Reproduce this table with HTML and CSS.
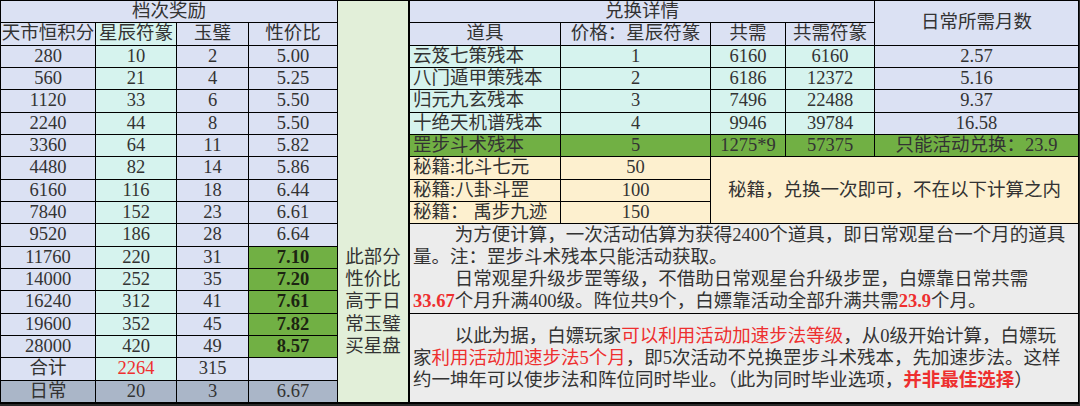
FILE: index.html
```html
<!DOCTYPE html>
<html lang="zh-CN">
<head>
<meta charset="utf-8">
<title>档次奖励 / 兑换详情</title>
<link rel="stylesheet" href="styles.css">
</head>
<body>
<div class="sheet">
  <div class="c lv span4">档次奖励</div>
  <div class="mid">
    <span>此部分</span>
    <span>性价比</span>
    <span>高于日</span>
    <span>常玉璧</span>
    <span>买星盘</span>
  </div>
  <div class="c lv span4">兑换详情</div>
  <div class="c lv months">日常所需月数</div>

  <div class="c lv">天市恒积分</div><div class="c cy">星辰符篆</div><div class="c lv">玉璧</div><div class="c lv">性价比</div>
  <div class="c lv">道具</div><div class="c lv">价格：星辰符篆</div><div class="c lv">共需</div><div class="c lv">共需符篆</div>

  <div class="c lv">280</div><div class="c cy">10</div><div class="c lv">2</div><div class="c lv">5.00</div>
  <div class="c cy l">云笈七策残本</div><div class="c cy">1</div><div class="c cy">6160</div><div class="c cy">6160</div><div class="c lv">2.57</div>

  <div class="c lv">560</div><div class="c cy">21</div><div class="c lv">4</div><div class="c lv">5.25</div>
  <div class="c cy l">八门遁甲策残本</div><div class="c cy">2</div><div class="c cy">6186</div><div class="c cy">12372</div><div class="c lv">5.16</div>

  <div class="c lv">1120</div><div class="c cy">33</div><div class="c lv">6</div><div class="c lv">5.50</div>
  <div class="c cy l">归元九玄残本</div><div class="c cy">3</div><div class="c cy">7496</div><div class="c cy">22488</div><div class="c lv">9.37</div>

  <div class="c lv">2240</div><div class="c cy">44</div><div class="c lv">8</div><div class="c lv">5.50</div>
  <div class="c cy l">十绝天机谱残本</div><div class="c cy">4</div><div class="c cy">9946</div><div class="c cy">39784</div><div class="c lv">16.58</div>

  <div class="c lv">3360</div><div class="c cy">64</div><div class="c lv">11</div><div class="c lv">5.82</div>
  <div class="c gr l">罡步斗术残本</div><div class="c gr">5</div><div class="c gr">1275*9</div><div class="c gr">57375</div><div class="c gr">只能活动兑换：23.9</div>

  <div class="c lv">4480</div><div class="c cy">82</div><div class="c lv">14</div><div class="c lv">5.86</div>
  <div class="c yl l">秘籍:北斗七元</div><div class="c yl">50</div>
  <div class="c yl secret">秘籍，兑换一次即可，不在以下计算之内</div>

  <div class="c lv">6160</div><div class="c cy">116</div><div class="c lv">18</div><div class="c lv">6.44</div>
  <div class="c yl l">秘籍:八卦斗罡</div><div class="c yl">100</div>

  <div class="c lv">7840</div><div class="c cy">152</div><div class="c lv">23</div><div class="c lv">6.61</div>
  <div class="c yl l">秘籍：&nbsp;禹步九迹</div><div class="c yl">150</div>

  <div class="c lv">9520</div><div class="c cy">186</div><div class="c lv">28</div><div class="c lv">6.64</div>
  <div class="c tx note note1">
    <p>为方便计算，一次活动估算为获得2400个道具，即日常观星台一个月的道具<br>量。注：罡步斗术残本只能活动获取。</p>
    <p>日常观星升级步罡等级，不借助日常观星台升级步罡，白嫖靠日常共需<br><b class="red">33.67</b>个月升满400级。阵位共9个，白嫖靠活动全部升满共需<b class="red">23.9</b>个月。</p>
  </div>

  <div class="c lv">11760</div><div class="c cy">220</div><div class="c lv">31</div><div class="c gr b">7.10</div>
  <div class="c lv">14000</div><div class="c cy">252</div><div class="c lv">35</div><div class="c gr b">7.20</div>
  <div class="c lv">16240</div><div class="c cy">312</div><div class="c lv">41</div><div class="c gr b">7.61</div>
  <div class="c lv">19600</div><div class="c cy">352</div><div class="c lv">45</div><div class="c gr b">7.82</div>
  <div class="c tx note note2">
    <p>以此为据，白嫖玩家<span class="red">可以利用活动加速步法等级</span>，从0级开始计算，白嫖玩<br>家<span class="red">利用活动加速步法5个月</span>，即5次活动不兑换罡步斗术残本，先加速步法。这样<br>约一坤年可以使步法和阵位同时毕业。（此为同时毕业选项，<b class="red">并非最佳选择</b>）</p>
  </div>
  <div class="c lv">28000</div><div class="c cy">420</div><div class="c lv">49</div><div class="c gr b">8.57</div>
  <div class="c lv">合计</div><div class="c cy red">2264</div><div class="c lv">315</div><div class="c lv"></div>
  <div class="c dg">日常</div><div class="c dg">20</div><div class="c dg">3</div><div class="c dg">6.67</div>
</div>
</body>
</html>
```

FILE: styles.css
```css
* {
  box-sizing: border-box;
}

html, body {
  margin: 0;
  background: #2a2a2a;
}

body {
  font-family: "Liberation Serif", "Noto Sans CJK SC", serif;
  font-size: 18.5px;
  color: #333;
}

.sheet {
  display: grid;
  grid-template-columns: 94px 80px 71px 88px 71px 150px 149px 74px 88px 203px;
  grid-template-rows: repeat(18, minmax(0, 1fr));
  gap: 1px;
  width: 1079px;
  height: 404px;
  padding: 1px 1px 2px 1px;
  background: #000;
}

.c {
  display: flex;
  align-items: center;
  justify-content: center;
  line-height: 21px;
  white-space: nowrap;
  min-width: 0;
}

.l {
  justify-content: flex-start;
  padding-left: 3px;
}

.b {
  font-weight: bold;
  color: #1c2412;
}

.red {
  color: #ee2f2f;
}

b.red {
  font-weight: bold;
}

.lv { background: #dbe1f3; }
.cy { background: #d6f3ee; }
.gr { background: #71b044; }
.yl { background: #fdf0cf; }
.dg { background: #aab6c8; }
.tx { background: #ececec; }

.span4 {
  grid-column: span 4;
}

.months {
  grid-column: 10;
  grid-row: 1 / span 2;
}

.mid {
  grid-column: 5;
  grid-row: 1 / span 18;
  background: #e2efd9;
  border-right: 1px solid #000;
  display: flex;
  flex-direction: column;
  justify-content: flex-end;
  align-items: center;
  padding-bottom: 44.7px;
  line-height: 22.33px;
}

.secret {
  grid-column: 8 / span 3;
  grid-row: 8 / span 3;
}

.note {
  flex-direction: column;
  align-items: flex-start;
  justify-content: center;
  padding-left: 3px;
  line-height: 22px;
}

.note p {
  margin: 0;
  text-indent: 2.25em;
}

.note1 {
  grid-column: 6 / span 5;
  grid-row: 11 / span 4;
}

.note2 {
  grid-column: 6 / span 5;
  grid-row: 15 / span 4;
}
```
